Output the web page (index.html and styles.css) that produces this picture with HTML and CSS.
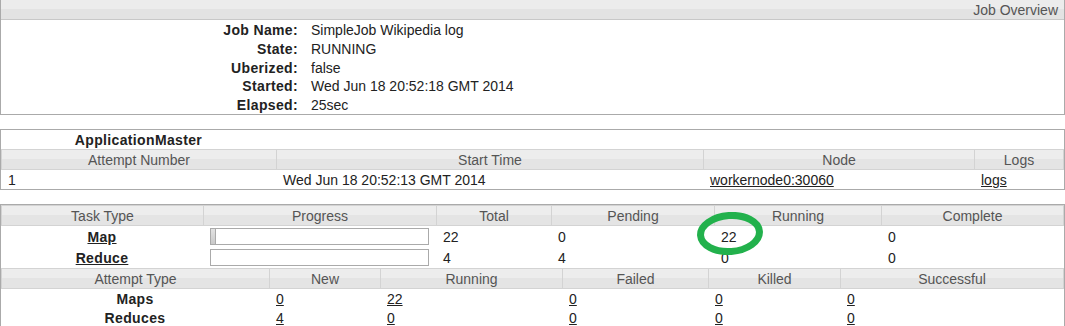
FILE: index.html
```html
<!DOCTYPE html>
<html>
<head>
<title>Job Overview</title>
<link rel="stylesheet" href="styles.css">
</head>
<body>

<div class="overview">
	<div class="bar">Job Overview</div>
	<dl class="info">
		<dt>Job Name:</dt><dd>SimpleJob Wikipedia log</dd>
		<dt>State:</dt><dd>RUNNING</dd>
		<dt>Uberized:</dt><dd>false</dd>
		<dt>Started:</dt><dd>Wed Jun 18 20:52:18 GMT 2014</dd>
		<dt>Elapsed:</dt><dd>25sec</dd>
	</dl>
</div>

<div class="box">
	<table class="grid">
		<colgroup><col style="width:275px"><col style="width:427px"><col style="width:271px"><col></colgroup>
		<tr><th class="title">ApplicationMaster</th><th class="title"></th><th class="title"></th><th class="title"></th></tr>
		<tr class="head"><th>Attempt Number</th><th>Start Time</th><th>Node</th><th>Logs</th></tr>
		<tr><td>1</td><td>Wed Jun 18 20:52:13 GMT 2014</td><td><a href="#">workernode0:30060</a></td><td><a href="#">logs</a></td></tr>
	</table>
</div>

<div class="box">
	<table class="grid tasks">
		<colgroup><col style="width:202px"><col style="width:233px"><col style="width:115px"><col style="width:163px"><col style="width:167px"><col></colgroup>
		<tr class="head"><th>Task Type</th><th>Progress</th><th>Total</th><th>Pending</th><th>Running</th><th>Complete</th></tr>
		<tr>
			<th class="type"><a href="#">Map</a></th>
			<td><div class="progress"><div class="fill"></div></div></td>
			<td>22</td><td>0</td><td>22</td><td>0</td>
		</tr>
		<tr>
			<th class="type"><a href="#">Reduce</a></th>
			<td><div class="progress"></div></td>
			<td>4</td><td>4</td><td>0</td><td>0</td>
		</tr>
	</table>
	<table class="grid">
		<colgroup><col style="width:268px"><col style="width:111px"><col style="width:182px"><col style="width:146px"><col style="width:132px"><col></colgroup>
		<tr class="head"><th>Attempt Type</th><th>New</th><th>Running</th><th>Failed</th><th>Killed</th><th>Successful</th></tr>
		<tr>
			<th class="type">Maps</th>
			<td><a href="#">0</a></td><td><a href="#">22</a></td><td><a href="#">0</a></td><td><a href="#">0</a></td><td><a href="#">0</a></td>
		</tr>
		<tr>
			<th class="type">Reduces</th>
			<td><a href="#">4</a></td><td><a href="#">0</a></td><td><a href="#">0</a></td><td><a href="#">0</a></td><td><a href="#">0</a></td>
		</tr>
	</table>
</div>

<svg class="circle" width="66" height="43" viewBox="0 0 66 43">
	<ellipse cx="33" cy="21.5" rx="29.5" ry="18" fill="none" stroke="#22b14c" stroke-width="7" transform="rotate(-4 33 21.5)"/>
</svg>

</body>
</html>
```

FILE: styles.css
```css
body {
	margin: 0;
	font-family: "Liberation Sans", Arial, sans-serif;
	font-size: 14px;
	color: #222;
	position: relative;
}

a {
	color: #222;
	text-decoration: underline;
}

.overview {
	border: 1px solid #aaa;
	border-top: 0;
}

.bar {
	height: 17px;
	line-height: 17px;
	padding-top: 2px;
	text-align: right;
	padding-right: 6px;
	color: #555;
	background: linear-gradient(#ececec 0, #ececec 45%, #e3e3e3 50%, #e3e3e3 100%);
	border-bottom: 1px solid #c8c8c8;
}

.info {
	display: grid;
	grid-template-columns: 297px 1fr;
	column-gap: 13px;
	margin: 0;
	padding-top: 1px;
	height: 93px;
	line-height: 18.8px;
}

.info dt {
	text-align: right;
	font-weight: bold;
	letter-spacing: 0.35px;
}

.info dd {
	margin: 0;
}

.box {
	border: 1px solid #aaa;
	margin-top: 14px;
}

.grid {
	width: 100%;
	table-layout: fixed;
	border-spacing: 0;
}

.grid th, .grid td {
	padding: 2px 7px 0;
	height: 17px;
	line-height: 17px;
	white-space: nowrap;
	overflow: hidden;
}

.grid td {
	text-align: left;
}

.grid .title {
	font-weight: bold;
	letter-spacing: 0.35px;
	text-align: center;
}

.head th {
	font-weight: normal;
	color: #555;
	text-align: center;
	background: linear-gradient(#ededed 0, #ededed 45%, #e4e4e4 50%, #e4e4e4 100%);
	border-top: 1px solid #d3d3d3;
	border-bottom: 1px solid #d3d3d3;
	border-left: 1px solid #d3d3d3;
}

.head th:last-child {
	border-right: 1px solid #d3d3d3;
}

.grid .type {
	font-weight: bold;
	letter-spacing: 0.35px;
	text-align: center;
}

.tasks td, .tasks .type {
	height: 19px;
}

.progress {
	height: 15px;
	margin-bottom: 2px;
	border: 1px solid #aaa;
	background: #fff;
}

.fill {
	width: 4px;
	height: 15px;
	background: linear-gradient(#e2e2e2, #c9c9c9);
	border-right: 1px solid #aaa;
}

.circle {
	position: absolute;
	left: 697px;
	top: 212px;
}
```
